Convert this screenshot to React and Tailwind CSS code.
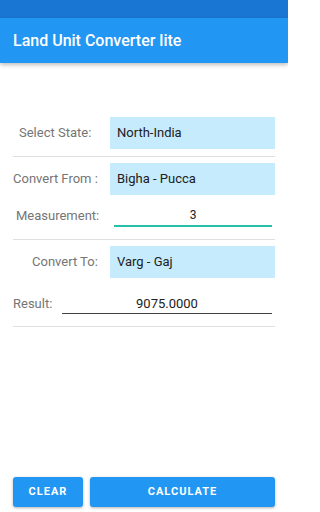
export default function App() {
  return (
    <div className="relative flex h-[512px] w-[288px] flex-col overflow-hidden bg-white font-['Roboto',sans-serif]">
      <div className="h-[18px] shrink-0 bg-[#1976d2]" />
      <header className="z-10 flex h-[45px] shrink-0 items-center bg-[#2196f3] px-[13px] shadow-[0_2px_4px_rgba(0,0,0,0.25)]">
        <h1 className="text-[16px] font-medium text-white">Land Unit Converter lite</h1>
      </header>

      <main className="flex flex-1 flex-col px-[13px] pt-[54px]">
        <div className="flex h-[32px] items-center">
          <span className="w-[97px] pl-[6px] text-[13px] text-[#757575]">Select State:</span>
          <div className="flex h-full flex-1 items-center bg-[#c5ebfd] px-[7px] text-[13px] text-[#212121]">North-India</div>
        </div>
        <div className="mt-[7px] h-px bg-[#e0e0e0]" />

        <div className="mt-[6px] flex h-[32px] items-center">
          <span className="w-[97px] text-[13px] text-[#757575]">Convert From :</span>
          <div className="flex h-full flex-1 items-center bg-[#c5ebfd] px-[7px] text-[13px] text-[#212121]">Bigha - Pucca</div>
        </div>

        <div className="mt-[10px] flex h-[22px] items-center">
          <span className="w-[101px] pl-[3px] text-[13px] text-[#757575]">Measurement:</span>
          <div className="mr-[3px] flex h-full flex-1 items-center justify-center border-b-2 border-[#26bfa8] text-[12px] text-[#212121]">3</div>
        </div>
        <div className="mt-[12px] h-px bg-[#e0e0e0]" />

        <div className="mt-[6px] flex h-[32px] items-center">
          <span className="w-[97px] pl-[19px] text-[13px] text-[#757575]">Convert To:</span>
          <div className="flex h-full flex-1 items-center bg-[#c5ebfd] px-[7px] text-[13px] text-[#212121]">Varg - Gaj</div>
        </div>

        <div className="mt-[16px] flex h-[20px] items-center">
          <span className="w-[49px] text-[13px] text-[#757575]">Result:</span>
          <div className="mr-[3px] flex h-full flex-1 items-center justify-center border-b border-[#424242] text-[13px] text-[#212121]">9075.0000</div>
        </div>
        <div className="mt-[12px] h-px bg-[#e0e0e0]" />

        <div className="mt-auto mb-[5px] flex gap-[7px]">
          <button type="button" className="h-[30px] w-[70px] rounded-[3px] bg-[#2196f3] text-[11px] font-bold tracking-[1px] text-white shadow-[0_1px_3px_rgba(0,0,0,0.3)]">
            CLEAR
          </button>
          <button type="button" className="h-[30px] flex-1 rounded-[3px] bg-[#2196f3] text-[11px] font-bold tracking-[1px] text-white shadow-[0_1px_3px_rgba(0,0,0,0.3)]">
            CALCULATE
          </button>
        </div>
      </main>
    </div>
  );
}
